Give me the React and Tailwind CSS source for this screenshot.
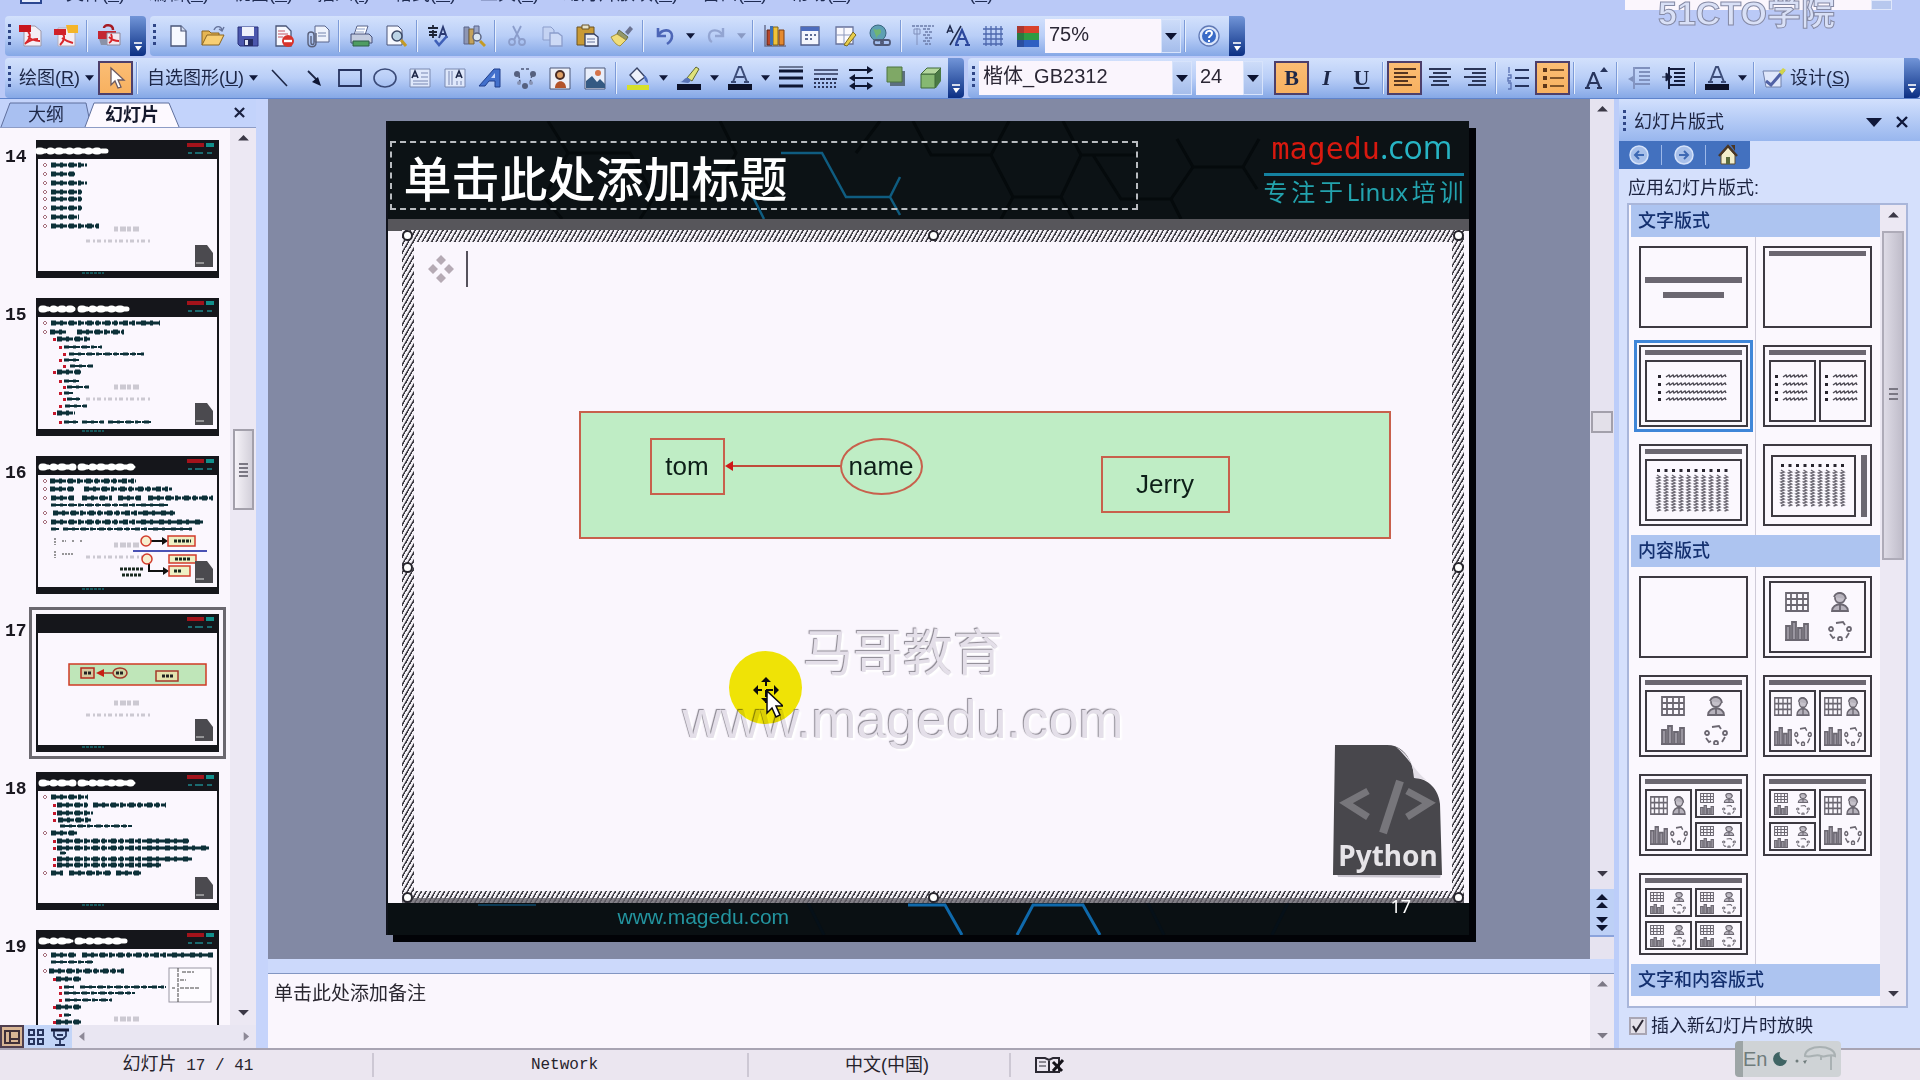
import React from "react";

const CJK = "font-['Liberation_Sans','Noto_Sans_CJK_SC',sans-serif]";

/* ---------- small building blocks ---------- */

function Svg({ children, box = 24, size = "size-6" }) {
  return (
    <svg viewBox={`0 0 ${box} ${box}`} className={`${size} shrink-0`} fill="none" aria-hidden="true">
      {children}
    </svg>
  );
}

function Tool({ label, children, active, width = "w-[35px]" }) {
  return (
    <button
      type="button"
      aria-label={label}
      className={`flex h-[34px] ${width} shrink-0 items-center justify-center ${
        active ? "border-2 border-[#4d3f6b] bg-gradient-to-b from-[#fbbd74] to-[#f7b160]" : ""
      }`}
    >
      {children}
    </button>
  );
}

function Sep() {
  return (
    <span className="flex h-8 w-2 shrink-0 justify-center">
      <span className="h-full w-px bg-[#7d9bd8]" />
      <span className="h-full w-px bg-[#e6eefc]" />
    </span>
  );
}

function Grip({ height = "h-6" }) {
  return (
    <span
      className={`${height} w-[3px] shrink-0 bg-[repeating-linear-gradient(180deg,#2f4687_0px,#2f4687_3px,transparent_3px,transparent_6px)]`}
    />
  );
}

function Down({ faded, label = "更多", width = "w-4" }) {
  return (
    <button type="button" aria-label={label} className={`flex h-8 ${width} shrink-0 items-center justify-center`}>
      <svg viewBox="0 0 10 6" className="h-[6px] w-[9px]">
        <path d="M0 0h10L5 6z" fill={faded ? "#8a9ac4" : "#10183a"} />
      </svg>
    </button>
  );
}

function Overflow() {
  return (
    <button
      type="button"
      aria-label="工具栏选项"
      className="flex w-4 shrink-0 items-end justify-center self-stretch rounded-r bg-gradient-to-b from-[#7295d8] to-[#0c2f84] pb-1"
    >
      <svg viewBox="0 0 10 10" className="size-[10px]">
        <path d="M1 1h8" stroke="#fff" strokeWidth="1.6" />
        <path d="M2 4h7L5 9z" fill="#fff" />
      </svg>
    </button>
  );
}

function Bar({ children, className = "" }) {
  return (
    <div
      className={`flex h-10 items-center rounded-l bg-gradient-to-b from-[#d3e1fc] via-[#b9cef7] to-[#86a8e6] ${className}`}
    >
      {children}
    </div>
  );
}

function Drop({ label, value, width, arrow = "w-5" }) {
  return (
    <div className={`relative flex h-[34px] shrink-0 ${width}`}>
      <select
        aria-label={label}
        defaultValue={value}
        className="h-full w-full appearance-none bg-[#faf5fd] pb-1 pl-1 text-xl leading-7 text-[#2b2735]"
      >
        <option>{value}</option>
      </select>
      <span
        className={`pointer-events-none absolute inset-y-0 right-0 flex ${arrow} items-center justify-center border border-[#d7e3fb] bg-gradient-to-b from-[#cddcf9] to-[#a5bdeb]`}
      >
        <svg viewBox="0 0 12 7" className="h-[7px] w-3">
          <path d="M0 0h12L6 7z" fill="#0c1230" />
        </svg>
      </span>
    </div>
  );
}

/* ---------- toolbar drawings ---------- */

const Page = ({ fill = "#f6f8ff" }) => (
  <path d="M5 2h10l5 5v15H5z" fill={fill} stroke="#4a5578" strokeWidth="1.3" />
);

const I = {
  pdf: (
    <Svg>
      <path d="M5 2h11l6 5v15H5z" fill="#f4eef5" stroke="#9a96a8" />
      <path d="M0 1h12v7H0z" fill="#c8161d" />
      <path d="M9 8c4 3 1 8-3 12M9 12c3 4 7 5 12 5M7 19c4-3 8-4 12-4" stroke="#d8262b" strokeWidth="1.8" />
    </Svg>
  ),
  pdfMail: (
    <Svg>
      <path d="M4 4h13l4 4v14H4z" fill="#f4eef5" stroke="#b3adba" />
      <path d="M0 5h12v6H0z" fill="#d0222a" />
      <path d="M12 1h12v8H14z" fill="#f4b52a" />
      <path d="M9 10c3 4 0 8-3 11M8 14c4 3 7 4 11 5" stroke="#d8262b" strokeWidth="2" />
    </Svg>
  ),
  pdfReview: (
    <Svg>
      <path d="M7 4c0-4 9-4 9 2" stroke="#a51b24" strokeWidth="2.5" />
      <path d="M1 7h18v8H1z" fill="#c42631" />
      <path d="M10 9h13v12H10z" fill="#f1e8f0" stroke="#8d8798" />
      <path d="M12 19c4-2 3-7 2-9M12 13c3 3 6 4 10 4" stroke="#d8262b" strokeWidth="1.8" />
      <path d="M2 15h8v6H4z" fill="#8b92a8" />
    </Svg>
  ),
  fresh: <Svg><Page /><path d="M15 2v5h5" stroke="#4a5578" strokeWidth="1.2" fill="#d3dbef" /></Svg>,
  open: (
    <Svg>
      <path d="M1 21V7h7l2 2h8v3" fill="#e6b552" stroke="#8a6420" />
      <path d="M1 21 6 11h17l-5 10z" fill="#f8cf74" stroke="#8a6420" />
      <path d="M13 6c2-5 7-4 8 0m2-3-2 4-3-2" stroke="#66749c" strokeWidth="1.4" />
    </Svg>
  ),
  save: (
    <Svg>
      <path d="M2 3h20v19H4l-2-2z" fill="#4b57ad" stroke="#29307a" />
      <path d="M6 3h12v9H6z" fill="#eef1fb" />
      <path d="M8 15h9v7H8z" fill="#252c63" />
      <path d="M9 16h3v5H9z" fill="#e3e7f6" />
    </Svg>
  ),
  permission: (
    <Svg>
      <Page />
      <path d="M7 7h7M7 10h10M7 13h5" stroke="#c55560" />
      <circle cx="17" cy="17" r="6" fill="#d8342c" />
      <path d="M13 17h8" stroke="#fff" strokeWidth="2.4" />
    </Svg>
  ),
  attach: (
    <Svg>
      <path d="M9 2h10l4 4v12H9z" fill="#eef2fc" stroke="#58648c" />
      <path d="M12 9h8M12 12h8" stroke="#7484ad" />
      <path d="M10 9v10c0 5-8 5-8 0v-8c0-4 6-4 6 0v8c0 2-3 2-3 0v-7" stroke="#59607a" strokeWidth="1.4" />
    </Svg>
  ),
  print: (
    <Svg>
      <path d="M8 2h11l-3 9H5z" fill="#fbfcff" stroke="#59648a" />
      <path d="M2 10h18l3 3v6H2z" fill="#c4cce0" stroke="#46507a" />
      <path d="M4 17h16v5H4z" fill="#4f9d62" stroke="#2e5f48" />
      <path d="M8 5h8M7 8h8" stroke="#8ea0c8" />
    </Svg>
  ),
  preview: (
    <Svg>
      <path d="M3 2h11l4 4v15H3z" fill="#f6f8ff" stroke="#4a5578" />
      <circle cx="13" cy="12" r="5" fill="#bcd4e6" stroke="#3e4a66" strokeWidth="1.5" />
      <path d="m17 16 5 6" stroke="#c49a24" strokeWidth="3" />
    </Svg>
  ),
  spell: (
    <Svg>
      <path d="M1 4h10M6 1v3M2 8h8M6 6v8M2 11h8" stroke="#1d2436" strokeWidth="1.8" />
      <path d="m12 14 4-11 4 11M14 10h5" stroke="#2b3a72" strokeWidth="1.8" />
      <path d="m8 16 4 5 8-9" stroke="#3f60b8" strokeWidth="2.6" />
    </Svg>
  ),
  research: (
    <Svg>
      <path d="M2 3h5v17H2z" fill="#8d96b4" stroke="#5b658a" />
      <path d="M7 5h5v15H7z" fill="#c4a25c" stroke="#77643a" />
      <path d="M12 2h5v10h-5z" fill="#9aa6c8" stroke="#5b658a" />
      <circle cx="15" cy="13" r="4" fill="#d9e6f4" stroke="#59627e" strokeWidth="1.4" />
      <path d="m18 17 5 5" stroke="#c49a24" strokeWidth="3" />
    </Svg>
  ),
  cut: (
    <Svg>
      <path d="M8 2l7 14M16 2 9 16" stroke="#8b9dcb" strokeWidth="1.8" />
      <circle cx="7" cy="18" r="3" stroke="#8b9dcb" strokeWidth="1.8" />
      <circle cx="17" cy="18" r="3" stroke="#8b9dcb" strokeWidth="1.8" />
    </Svg>
  ),
  copy: (
    <Svg>
      <path d="M3 3h8l3 3v10H3z" fill="#c4d3f3" stroke="#8b9dcb" />
      <path d="M10 9h8l4 3v10H10z" fill="#cddaf6" stroke="#8b9dcb" strokeWidth="1.3" />
    </Svg>
  ),
  paste: (
    <Svg>
      <path d="M2 3h17v18H2z" fill="#c99a35" stroke="#6a5324" />
      <path d="M7 1h7v4H7z" fill="#e6e2c8" stroke="#6a5324" />
      <path d="M10 10h9l4 3v9H10z" fill="#eef1fb" stroke="#343d5e" strokeWidth="1.3" />
      <path d="M12 15h8M12 18h8" stroke="#65739c" />
    </Svg>
  ),
  painter: (
    <Svg>
      <path d="m15 8 5-6 3 3-5 6z" fill="#6b7391" />
      <path d="m9 6 9 7-2 3-9-6z" fill="#93986c" stroke="#646a44" />
      <path d="m7 10 9 6-6 6c-4-1-7-5-9-9z" fill="#f0dd79" stroke="#a2913e" />
    </Svg>
  ),
  undo: (
    <Svg>
      <path d="M5 4v8h8M5 12c4-8 14-7 14 0 0 4-2 6-5 8" stroke="#4d66b7" strokeWidth="2.6" />
    </Svg>
  ),
  redo: (
    <Svg>
      <path d="M19 4v8h-8M19 12C15 4 5 5 5 12c0 3 1 5 3 6" stroke="#93a5d2" strokeWidth="2.4" />
    </Svg>
  ),
  chart: (
    <Svg>
      <path d="M2 1v21h21" stroke="#6a7090" strokeWidth="1.5" />
      <path d="M4 6h5v15H4z" fill="#b8452a" stroke="#5e2516" />
      <path d="M10 3h5v18h-5z" fill="#f0c23b" stroke="#7d641b" />
      <path d="M16 6h5v15h-5z" fill="#e58a30" stroke="#7d3f12" />
      <path d="M7 2h3v19H7z" fill="#3b6fb8" />
    </Svg>
  ),
  table: (
    <Svg>
      <path d="M3 3h18v18H3z" fill="#f4f6fd" stroke="#4f5c88" strokeWidth="1.3" />
      <path d="M3 3h18v4H3z" fill="#4c6cbd" />
      <path d="M7 10h3v2H7zm5 0h2v2h-2zm4 0h2v2h-2zM7 14h3v2H7zm5 0h2v2h-2z" fill="#5f6d96" />
    </Svg>
  ),
  borders: (
    <Svg>
      <path d="M3 3h17v17H3z" fill="#faf9fe" stroke="#68739c" strokeWidth="1.3" />
      <path d="M11 3v17M3 11h17" stroke="#8e99bd" />
      <path d="m11 21 9-13 3 3-9 11z" fill="#e8cd4a" stroke="#7a6920" />
    </Svg>
  ),
  link: (
    <Svg>
      <circle cx="10" cy="9" r="8" fill="#5d9fb3" stroke="#3a6580" />
      <path d="M5 4c3 4 7-1 8 3s-5 3-4 8" fill="#6fb574" />
      <rect x="6" y="16" width="9" height="5" rx="2" stroke="#4f5876" strokeWidth="1.8" />
      <rect x="13" y="16" width="9" height="5" rx="2" stroke="#4f5876" strokeWidth="1.8" />
    </Svg>
  ),
  expand: (
    <Svg>
      <path d="M1 2h22M12 5h8M14 8h8M12 11h8M14 14h8M12 17h8M14 20h6" stroke="#6c7ca9" strokeWidth="1.5" strokeDasharray="3 1" />
      <path d="M6 4v17M3 5h6v5H3z" stroke="#8190bb" />
    </Svg>
  ),
  format: (
    <Svg>
      <path d="m1 9 3-7 3 7M2 7h4" stroke="#1f2a4d" strokeWidth="1.5" />
      <path d="M15 2 4 21" stroke="#1f2a4d" strokeWidth="1.5" />
      <path d="m10 20 6-14 6 14M12 15h8M9 21h4M19 21h5" stroke="#2c479c" strokeWidth="2.2" />
    </Svg>
  ),
  grid: (
    <Svg>
      <path d="M5 2v20M10 2v20M15 2v20M20 2v20M2 5h20M2 10h20M2 15h20M2 20h20" stroke="#4d67ad" strokeWidth="1.3" />
    </Svg>
  ),
  color: (
    <Svg>
      <path d="M1 2h22v7H1z" fill="#d9422c" />
      <path d="M1 9h22v7H1z" fill="#2f9b43" />
      <path d="M1 16h22v7H1z" fill="#2f60c2" />
      <path d="M1 2h7v21H1z" fill="#1b1b3c" opacity=".25" />
    </Svg>
  ),
  help: (
    <Svg>
      <circle cx="12" cy="12" r="10" fill="#dbe6fb" stroke="#6079b5" strokeWidth="1.3" />
      <circle cx="12" cy="12" r="7" fill="#3a6bc6" />
      <path d="M9 10c0-4 6-4 6-1 0 3-3 3-3 5M12 16v2" stroke="#fff" strokeWidth="2" />
    </Svg>
  ),
  pointer: (
    <Svg>
      <path d="M7 2v17l4-4 3 7 3-1-3-7h6z" fill="#fff" stroke="#6b5a63" strokeWidth="1.3" />
    </Svg>
  ),
  line: <Svg><path d="m4 4 15 16" stroke="#1d2747" strokeWidth="1.6" /></Svg>,
  arrow: (
    <Svg>
      <path d="m5 5 9 9" stroke="#1d2747" strokeWidth="1.8" />
      <path d="m18 20-9-4 6-5z" fill="#0d1533" />
    </Svg>
  ),
  rect: <Svg><path d="M1 4h22v16H1z" stroke="#26335f" strokeWidth="1.8" /></Svg>,
  oval: <Svg><ellipse cx="12" cy="12" rx="11" ry="9" stroke="#3a4a78" strokeWidth="1.6" /></Svg>,
  textBox: (
    <Svg>
      <path d="M2 3h20v18H2z" fill="#dfe8fb" stroke="#7b89b0" />
      <path d="m4 12 3-7 3 7M5 10h4" stroke="#1e2848" strokeWidth="1.6" />
      <path d="M13 7h7M13 11h7M5 15h15M5 18h15" stroke="#7887b2" />
    </Svg>
  ),
  vertText: (
    <Svg>
      <path d="M2 3h20v18H2z" fill="#dfe8fb" stroke="#7b89b0" />
      <path d="m13 12 3-7 3 7M14 10h4" stroke="#1e2848" strokeWidth="1.6" />
      <path d="M6 5v14M9 5v14M14 15v4M18 15v4" stroke="#7887b2" />
    </Svg>
  ),
  wordArt: (
    <Svg>
      <path d="M1 20 16 3h6v18h-5v-6h-6l-4 5z" fill="#4270cc" stroke="#203f8c" />
      <path d="m13 12 4-5v5z" fill="#c8d8fa" />
    </Svg>
  ),
  diagram: (
    <Svg>
      <path d="M8 3h8M19 9l-2 8M6 9l1 8" stroke="#4d5878" strokeWidth="1.5" strokeDasharray="3 2" />
      <circle cx="4" cy="8" r="3" fill="#55607f" />
      <circle cx="20" cy="8" r="3" fill="#55607f" />
      <circle cx="12" cy="20" r="3" fill="#55607f" />
      <circle cx="6" cy="17" r="2" fill="#8793b4" />
      <circle cx="18" cy="17" r="2" fill="#8793b4" />
    </Svg>
  ),
  clip: (
    <Svg>
      <path d="M2 2h20v21H2z" fill="#eef0f8" stroke="#4d5878" />
      <path d="M7 22c0-9 11-9 11 0z" fill="#b3542a" />
      <circle cx="12" cy="9" r="4" fill="#e0a065" stroke="#4b2d25" strokeWidth="2" />
    </Svg>
  ),
  picture: (
    <Svg>
      <path d="M2 2h20v21H2z" fill="#e8eefb" stroke="#4d5878" />
      <path d="M3 22v-7l6-5 5 6 3-3 5 5v4z" fill="#345a83" />
      <circle cx="15" cy="7" r="3" fill="#d5744a" />
    </Svg>
  ),
  fill: (
    <Svg>
      <path d="m4 9 7-7 8 9-8 6z" fill="#eef2fb" stroke="#394465" strokeWidth="1.4" />
      <path d="M18 9c3 2 4 4 4 8-3-1-4-4-4-8z" fill="#4e6fc0" />
      <path d="M1 19h22v5H1z" fill="#d6e02a" />
    </Svg>
  ),
  lineColor: (
    <Svg>
      <path d="m10 12 9-11 3 2-7 12z" fill="#dfe27b" stroke="#60682e" />
      <path d="M3 16c4 0 4-5 8-4 3 1 3 4 0 5z" fill="#5a74b8" />
      <path d="M0 18h24v6H0z" fill="#0c1128" />
    </Svg>
  ),
  fontColor: (
    <Svg>
      <path d="M5 16 11 1h2l6 15M8 11h8M3 16h5M16 16h5" stroke="#3c4c78" strokeWidth="2" />
      <path d="M0 18h24v6H0z" fill="#0c1128" />
    </Svg>
  ),
  lineStyle: <Svg><path d="M0 5h24M0 12h24M0 20h24" stroke="#0e1632" strokeWidth="3" /><path d="M0 1h24" stroke="#0e1632" /></Svg>,
  dashStyle: (
    <Svg>
      <path d="M0 4h24M0 8h24" stroke="#2c365a" strokeWidth="1.5" />
      <path d="M0 13h24" stroke="#2c365a" strokeWidth="2" strokeDasharray="5 1" />
      <path d="M0 17h24M0 21h24" stroke="#2c365a" strokeWidth="2" strokeDasharray="2 2" />
    </Svg>
  ),
  arrowStyle: (
    <Svg>
      <path d="M0 4h20M4 12h20M3 20h18" stroke="#0e1632" strokeWidth="2" />
      <path d="m18 0 6 4-6 4zM6 8l-6 4 6 4zM6 16l-6 4 6 4zM18 16l6 4-6 4z" fill="#0e1632" />
    </Svg>
  ),
  shadow: (
    <Svg>
      <path d="M6 5h15v15H6z" fill="#5c6f80" />
      <path d="M3 1h15v15H3z" fill="#7fa866" stroke="#4d7540" />
    </Svg>
  ),
  cube: (
    <Svg>
      <path d="m2 8 6-6h14v13l-5 7H2z" fill="#4a7a45" />
      <path d="M2 8h14v14H2z" fill="#86b872" stroke="#3f6a3a" />
      <path d="m2 8 6-6h14l-6 6z" fill="#b2d69c" stroke="#3f6a3a" />
    </Svg>
  ),
  left: <Svg><path d="M1 3h22M1 7h14M1 11h22M1 15h14M1 19h18" stroke="#573620" strokeWidth="2.2" /></Svg>,
  center: <Svg><path d="M1 3h22M5 7h14M1 11h22M5 15h14M3 19h18" stroke="#2b3658" strokeWidth="2.2" /></Svg>,
  right: <Svg><path d="M1 3h22M9 7h14M1 11h22M9 15h14M5 19h18" stroke="#2b3658" strokeWidth="2.2" /></Svg>,
  numbers: (
    <Svg>
      <path d="M9 4h14M9 12h14M9 20h14" stroke="#26345e" strokeWidth="2.2" />
      <path d="M3 1v6M2 9h3v3H2v3h3M2 17h3v6H2" stroke="#5d74b4" strokeWidth="1.4" />
    </Svg>
  ),
  bullets: (
    <Svg>
      <path d="M9 4h14M9 12h14M9 20h14" stroke="#81552a" strokeWidth="2.2" />
      <path d="M2 2h4v4H2zm0 8h4v4H2zm0 8h4v4H2z" fill="#5d3518" />
    </Svg>
  ),
  grow: (
    <Svg>
      <path d="m3 22 6-15h1l6 15M6 17h8M1 22h5M13 22h5" stroke="#27345c" strokeWidth="2.2" />
      <path d="m16 6 4-5 4 5z" fill="#27345c" />
    </Svg>
  ),
  outdent: (
    <Svg>
      <path d="M8 2h15M12 6h11M12 10h11M12 14h11M8 18h15M7 1v22" stroke="#7f90bd" strokeWidth="1.8" />
      <path d="m6 10-5 3 5 3" fill="#7f90bd" />
    </Svg>
  ),
  indent: (
    <Svg>
      <path d="M8 3h15M12 7h11M12 11h11M12 15h11M8 19h15M7 1v22" stroke="#131c3d" strokeWidth="2" />
      <path d="M0 11h7m-3-4 6 4-6 4z" stroke="#131c3d" fill="#131c3d" />
    </Svg>
  ),
  design: (
    <Svg>
      <path d="M1 5h18v16H4z" fill="#dfe7fb" stroke="#7180aa" />
      <path d="m4 15 5 4 13-15" stroke="#5162a6" strokeWidth="3" />
      <path d="m17 6 4-4 3 2-4 5z" fill="#d2d44a" />
    </Svg>
  ),
};

/* ---------- menu and toolbars ---------- */

const MENU = [
  ["文件", "F"], ["编辑", "E"], ["视图", "V"], ["插入", "I"], ["格式", "O"], ["工具", "T"],
  ["幻灯片放映", "D"], ["窗口", "W"], ["帮助", "H"], ["Adobe PDF", "B"],
];

function MenuBar() {
  return (
    <div className="relative h-4 shrink-0">
      <nav className="flex h-1 items-end gap-6 overflow-hidden pl-5 text-lg leading-5 text-[#1f2b52]">
        <span className="h-3 w-[22px] shrink-0 border-2 border-[#2c4791] bg-[#e7edfc]" />
        {MENU.map(([t, k]) => (
          <button type="button" key={k} className="shrink-0">
            {t}(<u>{k}</u>)
          </button>
        ))}
      </nav>
      <div className="absolute top-0 right-7 flex h-[10px] w-[267px] overflow-hidden">
        <input aria-label="键入需要帮助的问题" className="h-full min-w-0 flex-1 bg-[#fbf6fd]" />
        <span className="w-[21px] border border-[#dfe7fb] bg-[#b7c8ee]" />
      </div>
      <span className="absolute -top-3 right-[85px] text-[34px] leading-[50px] font-bold whitespace-nowrap text-[#d9e0f6] [-webkit-text-stroke:1px_#858aa5]">
        51CTO学院
      </span>
    </div>
  );
}

function StandardBars() {
  return (
    <div className="flex h-10 shrink-0 pl-[5px]">
      <Bar className="pl-[3px]">
        <Grip />
        <span className="w-[2px]" />
        <Tool label="转换为 PDF">{I.pdf}</Tool>
        <Tool label="转换并发送">{I.pdfMail}</Tool>
        <Sep />
        <Tool label="转换并审阅">{I.pdfReview}</Tool>
        <span className="w-1" />
      </Bar>
      <Overflow />
      <span className="w-1 shrink-0" />
      <Bar className="pl-[3px]">
        <Grip />
        <span className="w-1" />
        <Tool label="新建">{I.fresh}</Tool>
        <Tool label="打开">{I.open}</Tool>
        <Tool label="保存">{I.save}</Tool>
        <Tool label="权限">{I.permission}</Tool>
        <Tool label="电子邮件">{I.attach}</Tool>
        <Sep />
        <Tool label="打印">{I.print}</Tool>
        <Tool label="打印预览">{I.preview}</Tool>
        <Sep />
        <Tool label="拼写检查">{I.spell}</Tool>
        <Tool label="信息检索">{I.research}</Tool>
        <Sep />
        <Tool label="剪切">{I.cut}</Tool>
        <Tool label="复制">{I.copy}</Tool>
        <Tool label="粘贴">{I.paste}</Tool>
        <Tool label="格式刷">{I.painter}</Tool>
        <Sep />
        <Tool label="撤消">{I.undo}</Tool>
        <Down />
        <Tool label="恢复">{I.redo}</Tool>
        <Down faded />
        <Sep />
        <Tool label="插入图表">{I.chart}</Tool>
        <Tool label="插入表格">{I.table}</Tool>
        <Tool label="表格和边框">{I.borders}</Tool>
        <Tool label="插入超链接">{I.link}</Tool>
        <Sep />
        <Tool label="全部展开">{I.expand}</Tool>
        <Tool label="显示格式">{I.format}</Tool>
        <Tool label="网格">{I.grid}</Tool>
        <Tool label="颜色/灰度">{I.color}</Tool>
        <Drop label="显示比例" value="75%" width="w-[136px]" />
        <Sep />
        <Tool label="帮助" width="w-10">{I.help}</Tool>
      </Bar>
      <Overflow />
    </div>
  );
}

function DrawingBars() {
  return (
    <div className="flex h-[41px] shrink-0 border-b border-[#5f84cc] pl-[5px]">
      <Bar className="pl-[3px] text-lg text-[#1d2747]">
        <Grip />
        <button type="button" className="ml-2 whitespace-nowrap">绘图(<u>R</u>)</button>
        <Down width="w-[18px]" />
        <Tool label="选择对象" active>{I.pointer}</Tool>
        <Sep />
        <button type="button" className="ml-[6px] whitespace-nowrap">自选图形(<u>U</u>)</button>
        <Down width="w-[18px]" />
        <Tool label="直线">{I.line}</Tool>
        <Tool label="箭头">{I.arrow}</Tool>
        <Tool label="矩形">{I.rect}</Tool>
        <Tool label="椭圆">{I.oval}</Tool>
        <Tool label="文本框">{I.textBox}</Tool>
        <Tool label="竖排文本框">{I.vertText}</Tool>
        <Tool label="艺术字">{I.wordArt}</Tool>
        <Tool label="图示">{I.diagram}</Tool>
        <Tool label="剪贴画">{I.clip}</Tool>
        <Tool label="图片">{I.picture}</Tool>
        <Sep />
        <Tool label="填充颜色">{I.fill}</Tool>
        <Down />
        <Tool label="线条颜色">{I.lineColor}</Tool>
        <Down />
        <Tool label="字体颜色">{I.fontColor}</Tool>
        <Down />
        <Tool label="线型">{I.lineStyle}</Tool>
        <Tool label="虚线线型">{I.dashStyle}</Tool>
        <Tool label="箭头样式">{I.arrowStyle}</Tool>
        <Tool label="阴影样式">{I.shadow}</Tool>
        <Tool label="三维效果样式">{I.cube}</Tool>
      </Bar>
      <Overflow />
      <span className="w-1 shrink-0" />
      <Bar className="min-w-0 flex-1 pl-1 text-lg text-[#1d2747]">
        <Grip />
        <span className="w-1 shrink-0" />
        <Drop label="字体" value="楷体_GB2312" width="w-[213px]" />
        <span className="w-1 shrink-0" />
        <Drop label="字号" value="24" width="w-[67px]" />
        <span className="w-[11px] shrink-0" />
        <Tool label="加粗" active>
          <b className="font-['Liberation_Serif',serif] text-[22px]">B</b>
        </Tool>
        <Tool label="倾斜">
          <b className="font-['Liberation_Serif',serif] text-[22px] italic">I</b>
        </Tool>
        <Tool label="下划线">
          <b className="font-['Liberation_Serif',serif] text-[22px] underline">U</b>
        </Tool>
        <Sep />
        <Tool label="左对齐" active>{I.left}</Tool>
        <Tool label="居中">{I.center}</Tool>
        <Tool label="右对齐">{I.right}</Tool>
        <Sep />
        <Tool label="编号">{I.numbers}</Tool>
        <Tool label="项目符号" active>{I.bullets}</Tool>
        <Sep />
        <Tool label="增大字号">{I.grow}</Tool>
        <Sep />
        <Tool label="减少缩进量">{I.outdent}</Tool>
        <Tool label="增加缩进量">{I.indent}</Tool>
        <Sep />
        <Tool label="字体颜色">{I.fontColor}</Tool>
        <Down />
        <Sep />
        <button type="button" className="ml-1 flex items-center gap-1 whitespace-nowrap">
          {I.design}
          <span>设计(<u>S</u>)</span>
        </button>
      </Bar>
      <Overflow />
    </div>
  );
}

/* ---------- slide thumbnails ---------- */

const SLIDES = [
  {
    n: 14,
    title: [[1, 70]],
    lines: [
      [25, 0, [15, 51]], [34, 0, [15, 39]], [43, 0, [15, 51]], [52, 0, [15, 46]], [59, 0, [15, 46]],
      [68, 0, [15, 46]], [77, 0, [15, 43]], [86, 0, [15, 63]],
    ],
  },
  {
    n: 15,
    title: [[4, 28], [31, 37], [43, 91]],
    lines: [
      [25, 0, [15, 124]], [34, 0, [14, 31], [41, 88]], [41, 1, [21, 54]], [49, 2, [28, 66]], [56, 3, [33, 108]],
      [62, 2, [28, 43]], [68, 3, [34, 57]], [74, 1, [21, 45]], [83, 2, [28, 43]], [89, 3, [31, 53]],
      [95, 2, [28, 37]], [101, 3, [31, 44]], [108, 2, [29, 51]], [115, 1, [21, 39]], [124, 2, [28, 42], [46, 68], [72, 115]],
    ],
  },
  {
    n: 16,
    title: [[4, 38], [43, 98]],
    lines: [
      [25, 0, [14, 100]], [33, 0, [14, 38], [48, 136]], [42, 0, [15, 38], [46, 76], [82, 105], [112, 177]],
      [49, 9, [15, 132]], [57, 0, [17, 139]], [66, 0, [15, 168]], [73, 9, [15, 23], [27, 156]],
    ],
  },
  { n: 17, title: [], lines: [] },
  {
    n: 18,
    title: [[4, 38], [43, 98]],
    lines: [
      [25, 0, [15, 52]], [33, 1, [21, 52], [57, 130]], [41, 1, [21, 57]], [48, 1, [22, 55]], [54, 9, [24, 96]],
      [61, 0, [15, 41]], [69, 1, [21, 153]], [76, 1, [21, 174]], [81, 9, [24, 30]], [87, 1, [21, 156]],
      [93, 1, [21, 125]], [101, 0, [15, 27], [33, 75], [80, 105]],
    ],
  },
  {
    n: 19,
    title: [[4, 36], [40, 89]],
    lines: [
      [25, 0, [15, 40], [46, 177]], [32, 9, [15, 57]], [41, 0, [13, 88]], [49, 1, [20, 45]],
      [57, 2, [28, 38], [44, 130]], [63, 2, [28, 99]], [70, 2, [29, 76]], [77, 1, [20, 45]], [85, 2, [28, 35]], [92, 1, [20, 45]],
    ],
  },
];

const BULLET_X = [9, 18, 24, 28];

function Thumb({ slide }) {
  const { n, title, lines } = slide;
  return (
    <svg viewBox="0 0 183 138" className="h-[138px] w-[183px] shrink-0" role="img" aria-label={`幻灯片 ${n}`}>
      <rect width="183" height="138" fill="#15161b" />
      <rect x="2" y="19" width="179" height="112" fill="#fbf7fe" />
      <rect x="151" y="3" width="17" height="4" fill="#a3131b" />
      <rect x="170" y="3" width="8" height="4" fill="#12908c" />
      <path d="M152 13h4m3 0h8m4 0h5" stroke="#1b6b70" strokeWidth="2" />
      <path d="M46 133h22" stroke="#17565a" strokeWidth="2" strokeDasharray="3 1" />
      {title.map(([a, b]) => (
        <g key={a} stroke="#fff" strokeLinecap="round">
          <path d={`M${a + 2} 11H${b}`} strokeWidth="5" strokeDasharray="6 5 4 6" />
          <path d={`M${a + 2} 11H${b}`} strokeWidth="7" strokeDasharray="2 9 1 7" />
          <path d={`M${a + 2} 11H${b}`} strokeWidth="3" />
        </g>
      ))}
      <g stroke="#b9b6c0" strokeWidth="3">
        {n !== 18 && <path d="M78 89h26" strokeWidth="5" strokeDasharray="4 2 6 1" opacity=".7" />}
        {n !== 18 && n !== 19 && <path d="M50 101h66" strokeDasharray="4 3 2 2" opacity=".7" />}
      </g>
      {lines.map(([y, level, ...runs]) => (
        <g key={y}>
          {level === 0 && <path d={`M${BULLET_X[0]} ${y - 2}l2 2-2 2-2-2z`} stroke="#a5707c" fill="none" />}
          {level > 0 && level < 9 && <rect x={BULLET_X[level] - 1} y={y - 1} width="3" height="3" fill="#c6182c" />}
          {runs.map(([a, b]) => (
            <g key={a} stroke="#0c3038">
              <path d={`M${a} ${y}H${b}`} strokeWidth={level > 1 ? 2 : 3} strokeDasharray="9 1 6 1" />
              <path d={`M${a} ${y}H${b}`} strokeWidth={level > 1 ? 3 : 5} strokeDasharray="5 4 3 6" />
            </g>
          ))}
        </g>
      ))}
      {n === 16 && (
        <g fill="none">
          <path d="M97 95h74" stroke="#4a52b4" strokeWidth="2" />
          <path d="M115 85h14M113 108v7h17" stroke="#111" strokeWidth="2" />
          <path d="m126 81 6 4-6 4zM127 111l6 4-6 4z" fill="#111" />
          <g stroke="#d23b2b" strokeWidth="1.5">
            <circle cx="110" cy="85" r="5" fill="#f6efcf" />
            <circle cx="111" cy="103" r="5" fill="#f6efcf" />
            <path d="M132 80h27v10h-27zM133 99h27v8h-27zM133 110h21v10h-21z" fill="#eef0c4" />
          </g>
          <path d="M138 85h17M139 103h15M138 115h8M84 113h24M86 119h20" stroke="#1a2a20" strokeWidth="3" strokeDasharray="3 1" />
          <path d="M26 85h4m6 0h3m5 0h3M26 98h11M19 82v7M19 95v7" stroke="#777" strokeWidth="1.5" strokeDasharray="2 1" />
        </g>
      )}
      {n === 17 && (
        <g>
          <rect x="33" y="50" width="137" height="21" fill="#bfe6b9" stroke="#cf3b25" strokeWidth="1.5" />
          <rect x="45" y="54" width="13" height="10" fill="#d4c9a0" stroke="#b52a1e" strokeWidth="1.5" />
          <ellipse cx="84" cy="59" rx="7" ry="5" fill="#cfd3a2" stroke="#a5392a" strokeWidth="1.5" />
          <path d="M66 59h11" stroke="#a5392a" strokeWidth="1.5" />
          <path d="m60 59 8-4v8z" fill="#c81e14" />
          <rect x="120" y="57" width="22" height="10" fill="#e3e3ae" stroke="#a5392a" strokeWidth="1.5" />
          <path d="M48 59h8m24 0h8m38 3h12" stroke="#222" strokeWidth="3" strokeDasharray="3 1" />
        </g>
      )}
      {n === 19 && (
        <g>
          <rect x="133" y="38" width="42" height="34" fill="#fdfbff" stroke="#9a97a3" />
          <path d="M142 38v34M146 42h12M144 50h6M136 58h3m5 0h20" stroke="#444" strokeDasharray="4 1" />
        </g>
      )}
      <path d="M159 105h12l6 8v14h-18z" fill="#4b4a4f" />
      <path d="M160 123h8" stroke="#ddd" />
    </svg>
  );
}

function ArrowBtn({ dir = "up", label, tone = "#3b3846" }) {
  const paths = { up: "M0 6h12L6 0z", down: "M0 0h12L6 6z", left: "M7 0v10L1 5z", right: "M4 0v10l6-5z" };
  return (
    <button type="button" aria-label={label} className="flex size-[22px] shrink-0 items-center justify-center">
      <svg viewBox="0 0 12 10" className="h-[9px] w-[11px]">
        <path d={paths[dir]} fill={tone} />
      </svg>
    </button>
  );
}

function LeftPane() {
  return (
    <aside className="flex w-[268px] shrink-0 flex-col border-r-[12px] border-[#c6d4fb] bg-[#faf6fd]">
      <div className="flex h-[29px] shrink-0 items-end border-b border-[#8d9cc6] bg-[#c3d3fb]">
        <button type="button" className="relative flex h-[25px] w-[92px] items-center justify-center text-lg text-[#1d2747]">
          <svg viewBox="0 0 92 25" className="absolute inset-0 size-full" preserveAspectRatio="none">
            <path d="M1 25 10 1h76l5 24" fill="#a9c0f1" stroke="#5f6f9d" />
          </svg>
          <span className="relative">大纲</span>
        </button>
        <button type="button" className="relative -ml-2 flex h-[25px] w-[96px] items-center justify-center text-lg font-bold text-[#14182c]">
          <svg viewBox="0 0 96 25" className="absolute inset-0 size-full" preserveAspectRatio="none">
            <path d="M1 25 10 1h75l10 24" fill="#fdf9ff" stroke="#5f6f9d" />
          </svg>
          <span className="relative">幻灯片</span>
        </button>
        <button type="button" aria-label="关闭" className="mr-[6px] mb-1 ml-auto flex size-[22px] items-center justify-center">
          <svg viewBox="0 0 12 12" className="size-[11px]">
            <path d="m1 1 10 10M11 1 1 11" stroke="#1a2140" strokeWidth="2.4" />
          </svg>
        </button>
      </div>
      <div className="flex min-h-0 flex-1">
        <ol className="flex min-w-0 flex-1 flex-col overflow-hidden pt-[5px]">
          {SLIDES.map((s) => (
            <li key={s.n} className="flex h-[158px] shrink-0 items-start">
              <span className="w-[29px] shrink-0 pt-3 pl-[5px] font-['Liberation_Mono',monospace] text-lg leading-6 font-bold text-[#1a1820]">
                {s.n}
              </span>
              <button
                type="button"
                className={`border-[3px] p-1 ${s.n === 17 ? "border-[#6b686f]" : "border-transparent"}`}
              >
                <Thumb slide={s} />
              </button>
            </li>
          ))}
        </ol>
        <div className="flex w-[26px] shrink-0 flex-col items-center bg-[#ece8f3]">
          <ArrowBtn label="向上滚动" />
          <div className="flex-[279]" />
          <div className="flex h-[81px] w-[21px] items-center justify-center border-2 border-[#a3a0ab] bg-gradient-to-r from-[#f5f2f8] to-[#d3d0da]">
            <span className="h-[14px] w-[9px] bg-[repeating-linear-gradient(180deg,#7a7783_0px,#7a7783_2px,transparent_2px,transparent_4px)]" />
          </div>
          <div className="flex-[493]" />
          <ArrowBtn dir="down" label="向下滚动" />
        </div>
      </div>
      <div className="flex h-[23px] shrink-0 items-center bg-[#e9e6f2]">
        <div className="flex h-full w-[72px] items-center bg-[#c3d5f8]">
          <button type="button" aria-label="普通视图" className="flex h-[23px] w-6 items-center justify-center border-2 border-[#4f3f4f] bg-[#d8b695]">
            <svg viewBox="0 0 16 14" className="h-[14px] w-4" fill="none">
              <path d="M1 1h14v12H1zM6 1v12M6 9h9" stroke="#3f3038" strokeWidth="2" />
            </svg>
          </button>
          <button type="button" aria-label="幻灯片浏览视图" className="flex h-full w-6 items-center justify-center">
            <svg viewBox="0 0 16 16" className="size-4" fill="none">
              <path d="M1 1h5v5H1zM10 1h5v5h-5zM1 10h5v5H1zM10 10h5v5h-5z" stroke="#26335c" strokeWidth="2" />
            </svg>
          </button>
          <button type="button" aria-label="幻灯片放映" className="flex h-full w-6 items-center justify-center">
            <svg viewBox="0 0 18 18" className="size-[18px]" fill="none">
              <path d="M0 2h18" stroke="#141c3c" strokeWidth="3" />
              <path d="M3 3v5l3 3h6l3-3V3M9 11v5M4 17h10M6 7h6" stroke="#26335c" strokeWidth="1.8" />
            </svg>
          </button>
        </div>
        <ArrowBtn dir="left" label="向左滚动" tone="#8d8997" />
        <div className="flex-1" />
        <ArrowBtn dir="right" label="向右滚动" tone="#8d8997" />
      </div>
    </aside>
  );
}

/* ---------- slide canvas ---------- */

function HeaderArt() {
  return (
    <svg viewBox="0 0 1083 98" className="absolute top-0 left-0 h-[98px] w-[1083px]" fill="none">
      <g stroke="#050a0c" strokeWidth="3">
        <path d="M160 0l20 32-24 44 18 22M180 32h62l24 44-14 22M266 76h58l24-44-16-32M492 0l-24 32" />
        <path d="M525 0 543 34h60l22 42h48l20-42h58M603 34l18-34M625 76l-12 22M673 76l12 22M693 34 675 0M789 18l16 28-22 32h-50l-28-44M805 46h50l16-28M783 78l10 20M855 46l14 22" />
      </g>
      <path d="M393 32h41l24 44h44l10-20M502 76l10 18M364 74l12 24" stroke="#0f5c80" strokeWidth="2.5" />
    </svg>
  );
}

function FooterArt() {
  return (
    <svg viewBox="0 0 1083 32" className="absolute bottom-0 left-0 h-8 w-[1083px]" fill="none">
      <path d="M420 0l16 32M900 0l-16 32M760 0l16 32" stroke="#061018" strokeWidth="3" />
      <path d="M90 2h58" stroke="#0b3a55" strokeWidth="2" />
      <path d="M520 2h37l17 30M629 32l16-30h50l17 30" stroke="#0f69ab" strokeWidth="3" />
    </svg>
  );
}

function PythonBadge() {
  return (
    <div className="absolute top-[624px] left-[944px] h-[134px] w-[113px]">
      <svg viewBox="0 0 113 134" className="absolute inset-0 size-full" fill="none">
        <path d="M4 126 6 132 108 133 110 126z" fill="#c9c5cf" />
        <path d="M3 0h52c16 0 26 14 27 33 14 0 25 12 26 26l2 71H1z" fill="#48474c" />
        <path d="M64 2c12 6 18 18 18 31 6 0 11 1 15 4C86 30 74 10 64 2z" fill="#e2dee6" />
        <path d="m36 46-22 12 22 14M75 46l22 12-22 14" stroke="#77767b" strokeWidth="7" />
        <path d="M68 36 51 88" stroke="#77767b" strokeWidth="8" />
      </svg>
      <span className="absolute inset-x-0 top-[94px] text-center font-['Noto_Sans',sans-serif] text-[28px] leading-8 font-bold text-[#e6e4e8]">
        Python
      </span>
    </div>
  );
}

const HANDLES = [
  "top-0 left-0", "top-0 left-1/2 -ml-[5px]", "top-0 right-0",
  "top-1/2 left-0 -mt-[5px]", "top-1/2 right-0 -mt-[5px]",
  "bottom-0 left-0", "bottom-0 left-1/2 -ml-[5px]", "bottom-0 right-0",
];

function Slide() {
  return (
    <div className="relative h-[814px] w-[1083px] shrink-0 border-l-2 border-[#10131c] bg-[#faf6fd] shadow-[7px_7px_0_0_#020307]">
      <div className="absolute inset-x-0 top-0 h-[98px] bg-[#0c1215]">
        <HeaderArt />
      </div>
      <div className="absolute inset-x-0 top-[98px] h-3 bg-[#57565b]" />
      <div className="absolute inset-x-0 bottom-0 h-8 bg-[#0a1013]">
        <FooterArt />
      </div>

      <div className="absolute top-5 left-[2px] flex h-[69px] w-[748px] items-center border-2 border-dashed border-[#b9bcc0] pl-3 font-['Noto_Sans_CJK_SC',sans-serif] text-5xl leading-[64px] font-medium text-white">
        单击此处添加标题
      </div>

      <div className="absolute top-[6px] left-[876px] w-[200px]">
        <div className="pl-2 font-['DejaVu_Sans_Mono',monospace] text-[30px] leading-10 text-[#d8190f]">
          magedu<span className="font-['Open_Sans',sans-serif] text-[32px] text-[#27b4c4]">.com</span>
        </div>
        <div className="mt-1 h-[3px] bg-[#1481a0]" />
        <div className="flex justify-between font-['Noto_Sans','Noto_Sans_CJK_SC',sans-serif] text-2xl leading-8 text-[#23a3ae]">
          <span>专</span><span>注</span><span>于</span><span>Linux</span><span>培</span><span>训</span>
        </div>
      </div>

      <div className="absolute top-[109px] left-[14px] h-[673px] w-[1062px] bg-[repeating-linear-gradient(-60deg,#3c3a42_0px,#3c3a42_1px,#f3f0f6_2px,#f3f0f6_4px)] p-3">
        <div className="size-full bg-[#faf6fd]" />
        <span className="absolute inset-x-0 bottom-0 h-[5px] bg-[#65636a]/80" />
        {HANDLES.map((h) => (
          <span key={h} className={`absolute size-[11px] rounded-full border-2 border-[#26242c] bg-white ${h}`} />
        ))}
      </div>

      <svg viewBox="0 0 26 28" className="absolute top-[134px] left-[40px] h-7 w-[26px]" fill="#b5aab4">
        <path d="m13 0 5 5-5 5-5-5zM13 18l5 5-5 5-5-5zM5 9l5 5-5 5-5-5zM21 9l5 5-5 5-5-5z" />
      </svg>
      <span className="absolute top-[130px] left-[78px] h-9 w-[2px] bg-[#55525c]" />

      <div className="absolute top-[495px] left-0 w-[1019px] pl-3 text-center text-[#e4dfe9] [text-shadow:-1px_-1px_1px_#89858f,2px_2px_2px_#ffffff]">
        <div className="font-['Noto_Sans_CJK_SC',sans-serif] text-[50px] leading-[66px]">马哥教育</div>
        <div className="pt-1 text-[54px] leading-[66px]">www.magedu.com</div>
      </div>

      <div className="absolute top-[290px] left-[191px] h-[128px] w-[812px] border-2 border-[#c8604c] bg-[#bfedc5] text-[26px] text-[#0d1f18]">
        <div className="absolute top-[25px] left-[69px] flex h-[57px] w-[75px] items-center justify-center border-2 border-[#c8604c]">tom</div>
        <svg viewBox="0 0 118 14" className="absolute top-[46px] left-[143px] h-[14px] w-[118px]">
          <path d="M4 7h114" stroke="#c04a3a" strokeWidth="2" />
          <path d="m1 7 8-5v10z" fill="#cf1717" />
        </svg>
        <div className="absolute top-[25px] left-[259px] flex h-[57px] w-[83px] items-center justify-center rounded-[50%] border-2 border-[#c8604c]">name</div>
        <div className="absolute top-[43px] left-[520px] flex h-[57px] w-[129px] items-center justify-center border-2 border-[#c8604c]">Jerry</div>
      </div>

      <span className="absolute top-[530px] left-[341px] size-[73px] rounded-full bg-[#f4ec06] mix-blend-multiply" />
      <svg viewBox="0 0 30 42" className="absolute top-[556px] left-[365px] h-[42px] w-[30px]">
        <path d="M13 2v24M2 13h22" stroke="#0b0b0b" strokeWidth="2" strokeDasharray="7 4" />
        <path d="m13 0 5 5H8zM13 26l5-5H8zM0 13l5-5v10zM26 13l-5-5v10z" fill="#0b0b0b" />
        <path d="M14 14v22l5-5 4 9 4-2-4-9h7z" fill="#fff" stroke="#0b0b0b" strokeWidth="1.5" />
      </svg>

      <PythonBadge />
      <span className="absolute bottom-[19px] left-[1003px] font-['Noto_Sans',sans-serif] text-lg leading-5 text-white">17</span>
      <span className="absolute bottom-[6px] left-[230px] text-[21px] leading-6 text-[#23949f]">www.magedu.com</span>
    </div>
  );
}

function Center() {
  return (
    <main className="flex min-w-0 flex-1 flex-col">
      <div className="flex min-h-0 flex-1">
        <section className="flex min-w-0 flex-1 justify-center overflow-hidden bg-[#8289a4] pt-[22px] pr-1">
          <Slide />
        </section>
        <div className="flex w-6 shrink-0 flex-col items-center bg-[#e6e3f0]">
          <ArrowBtn label="向上滚动" />
          <div className="flex-[290]" />
          <div className="h-[22px] w-[22px] border-2 border-[#a3a0ab] bg-[#e3e0e9]" />
          <div className="flex-[431]" />
          <ArrowBtn dir="down" label="向下滚动" />
          <div className="mt-[3px] mb-[22px] flex h-12 w-full flex-col items-center justify-around border-b-2 border-[#8ba3dc] bg-[#bdd0f6]">
            <button type="button" aria-label="上一张幻灯片">
              <svg viewBox="0 0 12 14" className="h-[14px] w-3"><path d="M0 6h12L6 0zM0 14h12L6 8z" fill="#0d1430" /></svg>
            </button>
            <button type="button" aria-label="下一张幻灯片">
              <svg viewBox="0 0 12 14" className="h-[14px] w-3"><path d="M0 0h12L6 6zM0 8h12l-6 6z" fill="#0d1430" /></svg>
            </button>
          </div>
        </div>
      </div>
      <div className="h-[14px] shrink-0 bg-[#ccd9fb]" />
      <div className="flex h-[75px] shrink-0 border-t border-[#8296c2]">
        <label className="min-w-0 flex-1 bg-[#faf6fd]">
          <textarea
            aria-label="备注"
            defaultValue="单击此处添加备注"
            className="block size-full resize-none overflow-hidden px-[6px] pt-2 text-[19px] leading-6 text-[#2a2730]"
          />
        </label>
        <div className="flex w-6 flex-col items-center justify-between bg-[#ece8f3]">
          <ArrowBtn label="向上滚动" tone="#7d7986" />
          <ArrowBtn dir="down" label="向下滚动" tone="#7d7986" />
        </div>
      </div>
    </main>
  );
}

/* ---------- layout task pane ---------- */

const ITEM_ART = [
  <path key="table" d="M1 1h22v18H1zM6 1v18M12 1v18M18 1v18M1 7h22M1 13h22" />,
  <g key="person">
    <circle cx="12" cy="6" r="5" fill="#c5c1ca" />
    <path d="M6 5c2-6 11-5 12 2M4 19c0-9 16-9 16 0zM12 12v7" fill="#b6b2bc" />
  </g>,
  <path key="chart" d="M1 19V5h4v14zM7 19V1h4v18zM13 19V7h4v12zM19 19V3h4v16zM0 19h24" fill="#9a96a0" />,
  <g key="cycle">
    <circle cx="3" cy="8" r="2" />
    <circle cx="21" cy="8" r="2" />
    <circle cx="12" cy="18" r="2" />
    <path d="M8 2l7-1 2 3M2 13l3 4 2-1M21 12l-3 5" />
  </g>,
];

function Content({ x, y, w, h, dx, dy }) {
  return ITEM_ART.map((art, i) => (
    <svg
      key={i}
      x={x + (i % 2) * dx}
      y={y + (i > 1 ? dy : 0)}
      width={w}
      height={h}
      viewBox="0 0 24 20"
      preserveAspectRatio="none"
    >
      <g fill="none" stroke="#6b6771" strokeWidth="1.8">{art}</g>
    </svg>
  ));
}

function Box({ x, y, w, h }) {
  return <rect x={x} y={y} width={w} height={h} fill="#fbf8fe" stroke="#3d3a42" strokeWidth="2" />;
}

const TopLine = () => <rect x="6" y="5" width="97" height="5" fill="#6b6771" />;

function Bulleted({ x, w }) {
  return [31, 39, 47, 54].map((y) => (
    <g key={y}>
      <rect x={x} y={y - 1} width="3" height="3" fill="#28252e" />
      <path
        d={`M${x + 8} ${y + 1}${"l3 -2 1 2".repeat(Math.floor(w / 4))}`}
        stroke="#4b4852"
        strokeWidth="1.5"
        fill="none"
      />
    </g>
  ));
}

function Columns({ x, y, n }) {
  return Array.from({ length: n }, (_, i) => (
    <g key={i}>
      <rect x={x + i * 7.5} y={y} width="3" height="3" fill="#28252e" />
      <path
        d={`M${x + i * 7.5} ${y + 6}${"l3 2 -3 1".repeat(12)}`}
        stroke="#6d6974"
        strokeWidth="1.5"
        fill="none"
      />
    </g>
  ));
}

const Half = ({ x }) => (<><Box x={x} y={16} w={45} h={60} /><Content x={x + 4} y={22} w={18} h={19} dx={20} dy={30} /></>);
const Quarter = ({ x, y }) => (<><Box x={x} y={y} w={45} h={27} /><Content x={x + 4} y={y + 3} w={14} h={10} dx={22} dy={12} /></>);
const Full = ({ y }) => <Content x={22} y={y} w={24} h={20} dx={43} dy={29} />;

const TEXT_LAYOUTS = [
  ["标题幻灯片", <><rect x="6" y="31" width="97" height="6" fill="#6b6771" /><rect x="24" y="46" width="61" height="6" fill="#6b6771" /></>],
  ["只有标题", <TopLine />],
  ["标题和文本", <><TopLine /><Box x={7} y={16} w={95} h={60} /><Bulleted x={19} w={60} /></>],
  ["标题和两栏文本", <><TopLine /><Box x={7} y={16} w={45} h={60} /><Box x={57} y={16} w={45} h={60} /><Bulleted x={12} w={24} /><Bulleted x={62} w={24} /></>],
  ["标题和竖排文字", <><TopLine /><Box x={7} y={16} w={95} h={60} /><Columns x={18} y={25} n={10} /></>],
  ["垂直排列标题与文本", <><Box x={9} y={12} w={83} h={60} /><rect x="98" y="11" width="6" height="62" fill="#6b6771" /><Columns x={18} y={20} n={9} /></>],
];

const CONTENT_LAYOUTS = [
  ["空白", null],
  ["内容", <><Box x={7} y={6} w={95} h={70} /><Full y={16} /></>],
  ["标题和内容", <><TopLine /><Box x={7} y={16} w={95} h={60} /><Full y={21} /></>],
  ["标题和两栏内容", <><TopLine /><Half x={7} /><Half x={57} /></>],
  ["标题、内容与两段内容", <><TopLine /><Half x={7} /><Quarter x={57} y={16} /><Quarter x={57} y={49} /></>],
  ["标题、两段内容与内容", <><TopLine /><Quarter x={7} y={16} /><Quarter x={7} y={49} /><Half x={57} /></>],
  ["标题和四段内容", <><TopLine /><Quarter x={7} y={16} /><Quarter x={57} y={16} /><Quarter x={7} y={49} /><Quarter x={57} y={49} /></>],
];

function LayoutGrid({ items, selected }) {
  return (
    <div className="grid grid-cols-2 bg-[linear-gradient(90deg,transparent_calc(50%-1px),#cfcbd8_calc(50%-1px),#cfcbd8_50%,transparent_50%)] pb-px">
      {items.map(([name, art], i) => (
        <button type="button" key={name} aria-label={name} className="flex h-[99px] items-center justify-center">
          <span className={`border-[3px] p-[2px] ${i === selected ? "border-[#3f86d8]" : "border-transparent"}`}>
            <svg viewBox="0 0 109 82" className="h-[82px] w-[109px]">
              <rect x="1" y="1" width="107" height="80" fill="#fbf8fe" stroke="#3d3a42" strokeWidth="2" />
              {art}
            </svg>
          </span>
        </button>
      ))}
    </div>
  );
}

function SectionTitle({ children }) {
  return <h3 className="h-8 shrink-0 bg-[#adc4f0] pl-[7px] text-lg leading-8 font-medium text-[#14306f]">{children}</h3>;
}

function TaskPane() {
  return (
    <aside className="flex w-[306px] shrink-0 flex-col border-l-[5px] border-[#bccdf9] bg-[#d5e0fc] text-[#1c2340]">
      <header className="flex h-[42px] shrink-0 items-center bg-gradient-to-b from-[#d2e0fd] to-[#98b6ee] pt-1 pr-1 pl-1">
        <Grip />
        <h2 className="ml-2 text-lg">幻灯片版式</h2>
        <button type="button" aria-label="其他任务窗格" className="ml-auto flex size-7 items-center justify-center">
          <svg viewBox="0 0 16 9" className="h-[9px] w-4"><path d="M0 0h16L8 9z" fill="#10183a" /></svg>
        </button>
        <button type="button" aria-label="关闭" className="flex size-7 items-center justify-center">
          <svg viewBox="0 0 12 12" className="size-3"><path d="m1 1 10 10M11 1 1 11" stroke="#10183a" strokeWidth="2.4" /></svg>
        </button>
      </header>
      <div className="flex h-7 w-[131px] shrink-0 items-center justify-between rounded-br bg-[#4371bf] pr-[10px] pl-2">
        <button type="button" aria-label="后退">
          <Svg><circle cx="12" cy="12" r="9" fill="#a8c0ea" stroke="#d5e2fa" strokeWidth="1.5" /><path d="M17 12H8m4-4-4 4 4 4" stroke="#3e69b4" strokeWidth="2" /></Svg>
        </button>
        <span className="h-5 w-px bg-[#9db8e8]" />
        <button type="button" aria-label="前进">
          <Svg><circle cx="12" cy="12" r="9" fill="#a8c0ea" stroke="#d5e2fa" strokeWidth="1.5" /><path d="M7 12h9m-4-4 4 4-4 4" stroke="#3e69b4" strokeWidth="2" /></Svg>
        </button>
        <span className="h-5 w-px bg-[#9db8e8]" />
        <button type="button" aria-label="开始">
          <Svg><path d="M5 12v9h14v-9l-7-8z" fill="#f2eecb" stroke="#5f5132" /><path d="m3 13 9-10 9 10" stroke="#4b3725" strokeWidth="2.5" /><path d="M15 2h4v6" fill="#4b3725" /><path d="M10 14h4v7h-4z" fill="#5a6b3c" /></Svg>
        </button>
      </div>
      <p className="h-[34px] shrink-0 pl-[9px] text-lg leading-[38px]">应用幻灯片版式:</p>
      <div className="mr-3 ml-2 flex min-h-0 flex-1 border-2 border-[#a9b6da] bg-[#fbf8fe] pl-[2px]">
        <div className="min-w-0 flex-1 overflow-hidden">
          <SectionTitle>文字版式</SectionTitle>
          <LayoutGrid items={TEXT_LAYOUTS} selected={2} />
          <SectionTitle>内容版式</SectionTitle>
          <LayoutGrid items={CONTENT_LAYOUTS} />
          <SectionTitle>文字和内容版式</SectionTitle>
          <div className="h-3 w-1/2 border-r border-[#cfcbd8]" />
        </div>
        <div className="flex w-[26px] shrink-0 flex-col items-center bg-[#ece8f3]">
          <ArrowBtn label="向上滚动" />
          <div className="mt-1 flex w-[22px] flex-[328] items-center justify-center border-2 border-[#aeabb8] bg-gradient-to-r from-[#dedbe6] to-[#c0bdca]">
            <span className="h-[14px] w-[9px] bg-[repeating-linear-gradient(180deg,#7a7783_0px,#7a7783_2px,transparent_2px,transparent_5px)]" />
          </div>
          <div className="flex-[428]" />
          <ArrowBtn dir="down" label="向下滚动" />
        </div>
      </div>
      <label className="flex h-10 shrink-0 items-center gap-1 pb-1 pl-[10px] text-lg">
        <span className="relative flex size-[18px]">
          <input type="checkbox" defaultChecked className="peer size-[18px] appearance-none border-2 border-[#a9a6b4] bg-[#e4e1ea]" />
          <svg viewBox="0 0 14 14" className="pointer-events-none absolute inset-0 m-auto hidden size-[14px] peer-checked:block" fill="none">
            <path d="m2 7 3 5 7-11" stroke="#2d2a36" strokeWidth="2" />
          </svg>
        </span>
        插入新幻灯片时放映
      </label>
    </aside>
  );
}

/* ---------- status bar ---------- */

function StatusBar() {
  const cell = "flex h-6 items-center justify-center border-r-2 border-[#cdc8d4]";
  return (
    <footer className="relative flex h-8 shrink-0 items-center gap-2 border-t-2 border-[#a8a4b3] bg-[#ebe6f0] text-lg text-[#26232c]">
      <span className={`${cell} w-[374px] pl-1 font-['Liberation_Mono','Noto_Sans_CJK_SC',monospace]`}>
        <span className="text-base whitespace-pre"><span className="text-lg">幻灯片</span> 17 / 41</span>
      </span>
      <span className={`${cell} w-[367px] font-['Liberation_Mono',monospace] text-base`}>Network</span>
      <span className={`${cell} w-[254px] pl-2`}>中文(中国)</span>
      <button type="button" aria-label="拼写检查状态" className="ml-4">
        <svg viewBox="0 0 32 20" className="h-5 w-8" fill="none">
          <path d="M1 3h9l4 2 4-2h6v14H1zM14 5v12" stroke="#2b2832" strokeWidth="2" />
          <path d="M4 7h7M4 11h7" stroke="#2b2832" />
          <path d="m18 7 9 9M28 5 18 16" stroke="#15131a" strokeWidth="3" />
        </svg>
      </button>
      <div className="absolute right-[79px] bottom-[3px] flex h-9 w-[106px] items-center gap-1 rounded-sm border-l-8 border-[#9da5a6] bg-[#cfd3d6] text-xl text-[#6f7c7c]">
        En
        <svg viewBox="0 0 66 30" className="h-[30px] w-[66px] shrink-0" fill="none">
          <path d="M9 8a7 7 0 1 0 7 8 6 6 0 0 1-7-8z" fill="#3f6464" />
          <circle cx="26" cy="17" r="1.5" fill="#6f7c7c" />
          <path d="m32 17 2 3 2-4z" fill="#6f7c7c" />
          <path d="M34 12c0-12 30-12 30 0-6-3-9 2-14 0-5-3-9 2-16 0zM50 12v4M60 12v14" stroke="#a9b1b3" strokeWidth="2" />
        </svg>
      </div>
    </footer>
  );
}

export default function App() {
  return (
    <div className={`flex h-screen flex-col overflow-hidden bg-[#bac9f7] ${CJK}`}>
      <MenuBar />
      <StandardBars />
      <div className="h-[2px] shrink-0" />
      <DrawingBars />
      <div className="flex min-h-0 flex-1">
        <LeftPane />
        <Center />
        <TaskPane />
      </div>
      <StatusBar />
    </div>
  );
}
